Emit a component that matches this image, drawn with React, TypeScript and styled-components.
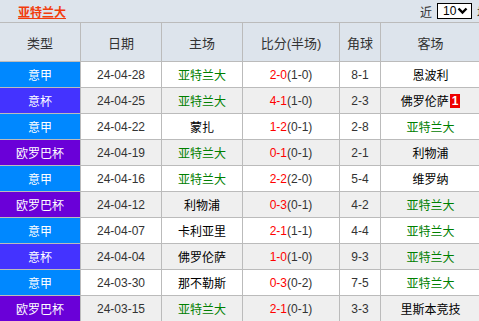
import styled, { createGlobalStyle } from "styled-components";

type Match = {
  league: string;
  date: string;
  home: string;
  score: string;
  half: string;
  corner: string;
  away: string;
  badge?: string;
};

const TEAM = "亚特兰大";

const matches: Match[] = [
  { league: "意甲", date: "24-04-28", home: "亚特兰大", score: "2-0", half: "(1-0)", corner: "8-1", away: "恩波利" },
  { league: "意杯", date: "24-04-25", home: "亚特兰大", score: "4-1", half: "(1-0)", corner: "2-3", away: "佛罗伦萨", badge: "1" },
  { league: "意甲", date: "24-04-22", home: "蒙扎", score: "1-2", half: "(0-1)", corner: "2-8", away: "亚特兰大" },
  { league: "欧罗巴杯", date: "24-04-19", home: "亚特兰大", score: "0-1", half: "(0-1)", corner: "2-1", away: "利物浦" },
  { league: "意甲", date: "24-04-16", home: "亚特兰大", score: "2-2", half: "(2-0)", corner: "5-4", away: "维罗纳" },
  { league: "欧罗巴杯", date: "24-04-12", home: "利物浦", score: "0-3", half: "(0-1)", corner: "4-2", away: "亚特兰大" },
  { league: "意甲", date: "24-04-07", home: "卡利亚里", score: "2-1", half: "(1-1)", corner: "4-4", away: "亚特兰大" },
  { league: "意杯", date: "24-04-04", home: "佛罗伦萨", score: "1-0", half: "(1-0)", corner: "9-3", away: "亚特兰大" },
  { league: "意甲", date: "24-03-30", home: "那不勒斯", score: "0-3", half: "(0-2)", corner: "7-5", away: "亚特兰大" },
  { league: "欧罗巴杯", date: "24-03-15", home: "亚特兰大", score: "2-1", half: "(0-1)", corner: "3-3", away: "里斯本竞技" },
];

const leagueColors: Record<string, string> = {
  意甲: "#0088ff",
  意杯: "#4433ff",
  欧罗巴杯: "#6a00d8",
};

const GlobalStyle = createGlobalStyle`
  html, body {
    margin: 0;
    padding: 0;
    overflow: hidden;
    background: #ffffff;
  }
  body {
    font-family: "Liberation Sans", "Noto Sans CJK SC", sans-serif;
    font-size: 12px;
    color: #333;
  }
`;

const App = () => {
  return (
    <Wrapper>
      <GlobalStyle />
      <TopBar>
        <Title>{TEAM}</Title>
        <Recent>
          近
          <Picker>
            10
            <svg width="11" height="8" viewBox="0 0 11 8">
              <path d="M1.5 1.5 L5.5 5.5 L9.5 1.5" stroke="#000" strokeWidth="2.4" fill="none" />
            </svg>
          </Picker>
          场
        </Recent>
      </TopBar>

      <Table>
        <HeadRow>
          <HeadCell>类型</HeadCell>
          <HeadCell>日期</HeadCell>
          <HeadCell>主场</HeadCell>
          <HeadCell>比分(半场)</HeadCell>
          <HeadCell>角球</HeadCell>
          <HeadCell>客场</HeadCell>
        </HeadRow>

        {matches.map((m, i) => (
          <Row key={m.date} $even={i % 2 === 1}>
            <League $color={leagueColors[m.league]}>{m.league}</League>
            <Cell>{m.date}</Cell>
            <Cell>
              <Team $mine={m.home === TEAM}>{m.home}</Team>
            </Cell>
            <Cell>
              <Score>{m.score}</Score>
              {m.half}
            </Cell>
            <Cell>{m.corner}</Cell>
            <Cell>
              <Team $mine={m.away === TEAM}>{m.away}</Team>
              {m.badge && <Badge>{m.badge}</Badge>}
            </Cell>
          </Row>
        ))}
      </Table>
    </Wrapper>
  );
};

const Wrapper = styled.div`
  width: 500px;
  background: #dde4ec;
`;

const TopBar = styled.div`
  height: 22px;
  display: flex;
  align-items: center;
  justify-content: space-between;
  padding-left: 18px;
  border-bottom: 1px solid #bbbbbb;
`;

const Title = styled.a`
  color: #f23c0c;
  font-size: 12px;
  font-weight: bold;
  text-decoration: underline;
  line-height: 14px;
  margin-top: 3px;
  cursor: pointer;
`;

const Recent = styled.div`
  display: flex;
  align-items: center;
  gap: 5px;
  font-size: 12px;
  color: #333;
  margin-right: 11px;
`;

const Picker = styled.div`
  width: 35px;
  height: 16px;
  box-sizing: border-box;
  border: 1px solid #000;
  background: #fff;
  display: flex;
  align-items: center;
  justify-content: space-between;
  padding: 0 3px 0 5px;
  font-size: 12px;
  color: #000;
`;

const COLUMNS = "80px 80px 80px 96px 40px 99px";

const Table = styled.div`
  width: 480px;
  display: flex;
  flex-direction: column;
  gap: 1px;
  background: #bbbbbb;
`;

const HeadRow = styled.div`
  display: grid;
  grid-template-columns: ${COLUMNS};
  gap: 1px;
  height: 38px;
`;

const HeadCell = styled.div`
  background: #dde4ec;
  display: flex;
  align-items: center;
  justify-content: center;
  font-size: 13px;
  color: #333;
`;

const Row = styled.div<{ $even: boolean }>`
  display: grid;
  grid-template-columns: ${COLUMNS};
  gap: 1px;
  height: 25px;

  & > div {
    background: ${(p) => (p.$even ? "#efefef" : "#ffffff")};
  }
`;

const Cell = styled.div`
  display: flex;
  align-items: center;
  justify-content: center;
  color: #333;
  white-space: nowrap;
`;

const League = styled(Cell)<{ $color: string }>`
  && {
    background: ${(p) => p.$color};
  }
  color: #ffffff;
`;

const Team = styled.span<{ $mine: boolean }>`
  color: ${(p) => (p.$mine ? "#008000" : "#000000")};
`;

const Score = styled.span`
  color: #ff0000;
`;

const Badge = styled.span`
  background: #ee0000;
  color: #fff;
  font-weight: bold;
  font-size: 12px;
  line-height: 14px;
  padding: 0 2px;
  margin-left: 1px;
`;

export default App;
